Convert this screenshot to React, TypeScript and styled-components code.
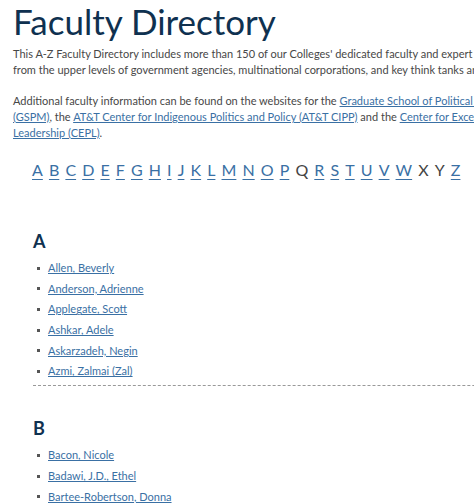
import React from "react";
import styled, { createGlobalStyle } from "styled-components";

const Global = createGlobalStyle`
  html, body { margin: 0; padding: 0; background: #fff; overflow: hidden; }
  body { font-family: Lato, "Open Sans", sans-serif; }
`;

const Page = styled.div`
  width: 700px;
  padding: 0 0 0 13px;
  box-sizing: border-box;
`;

const Title = styled.h1`
  margin: 0 0 5px 0;
  padding-top: 1px;
  font-family: Lato, sans-serif;
  font-weight: 400;
  font-size: 35px;
  line-height: 40px;
  color: #0f3150;
`;

const Para = styled.p`
  margin: 0 0 15px 0;
  font-size: 11px;
  line-height: 16px;
  color: #474747;
  white-space: nowrap;
`;

const Link = styled.a`
  color: #3a70a4;
  text-decoration: underline;
`;

const Alphabet = styled.nav`
  display: flex;
  gap: 6.1px;
  padding: 2px 0 0 19px;
  font-size: 16px;
  line-height: 24px;
`;

const Letter = styled.a<{ $active?: boolean }>`
  color: ${(p) => (p.$active ? "#3a70a4" : "#444")};
  text-decoration: ${(p) => (p.$active ? "underline" : "none")};
  text-underline-offset: 3px;
`;

const Section = styled.section<{ $divider?: boolean; $first?: boolean }>`
  margin-left: 20px;
  padding-bottom: ${(p) => (p.$divider ? "6px" : "10px")};
  border-bottom: ${(p) => (p.$divider ? "1px dashed #999" : "none")};
  margin-top: ${(p) => (p.$first ? "47px" : "30px")};
`;

const Heading = styled.h2`
  margin: 0 0 7px 0;
  font-size: 18px;
  font-weight: 700;
  color: #0f3150;
  line-height: 24px;
`;

const List = styled.ul`
  list-style: none;
  margin: 0;
  padding: 0;
  display: flex;
  flex-direction: column;
  gap: 4.7px;
`;

const Item = styled.li`
  display: flex;
  align-items: center;
  font-size: 11px;
  line-height: 16px;
  &::before {
    content: "";
    width: 3px;
    height: 3px;
    background: #555;
    margin: 0 8px 0 4px;
  }
`;

const letters = "ABCDEFGHIJKLMNOPQRSTUVWXYZ".split("");
const inactive = new Set(["Q", "X", "Y"]);

const groups: { letter: string; names: string[]; divider?: boolean }[] = [
  {
    letter: "A",
    names: [
      "Allen, Beverly",
      "Anderson, Adrienne",
      "Applegate, Scott",
      "Ashkar, Adele",
      "Askarzadeh, Negin",
      "Azmi, Zalmai (Zal)",
    ],
    divider: true,
  },
  {
    letter: "B",
    names: ["Bacon, Nicole", "Badawi, J.D., Ethel", "Bartee-Robertson, Donna", "Bass, Harold"],
  },
];

export default function App() {
  return (
    <Page>
      <Global />
      <Title>Faculty Directory</Title>
      <Para>
        This A-Z Faculty Directory includes more than 150 of our Colleges' dedicated faculty and expert practitioners
        <br />
        from the upper levels of government agencies, multinational corporations, and key think tanks and nonprofit
        organizations.
      </Para>
      <Para>
        Additional faculty information can be found on the websites for the{" "}
        <Link href="#">Graduate School of Political Management</Link>
        <br />
        <Link href="#">(GSPM)</Link>, the{" "}
        <Link href="#">AT&amp;T Center for Indigenous Politics and Policy (AT&amp;T CIPP)</Link> and the{" "}
        <Link href="#">Center for Excellence in Public</Link>
        <br />
        <Link href="#">Leadership (CEPL)</Link>.
      </Para>
      <Alphabet>
        {letters.map((l) => (
          <Letter key={l} href="#" $active={!inactive.has(l)}>
            {l}
          </Letter>
        ))}
      </Alphabet>
      {groups.map((g, i) => (
        <Section key={g.letter} $divider={g.divider} $first={i === 0}>
          <Heading>{g.letter}</Heading>
          <List>
            {g.names.map((n) => (
              <Item key={n}>
                <Link href="#">{n}</Link>
              </Item>
            ))}
          </List>
        </Section>
      ))}
    </Page>
  );
}
